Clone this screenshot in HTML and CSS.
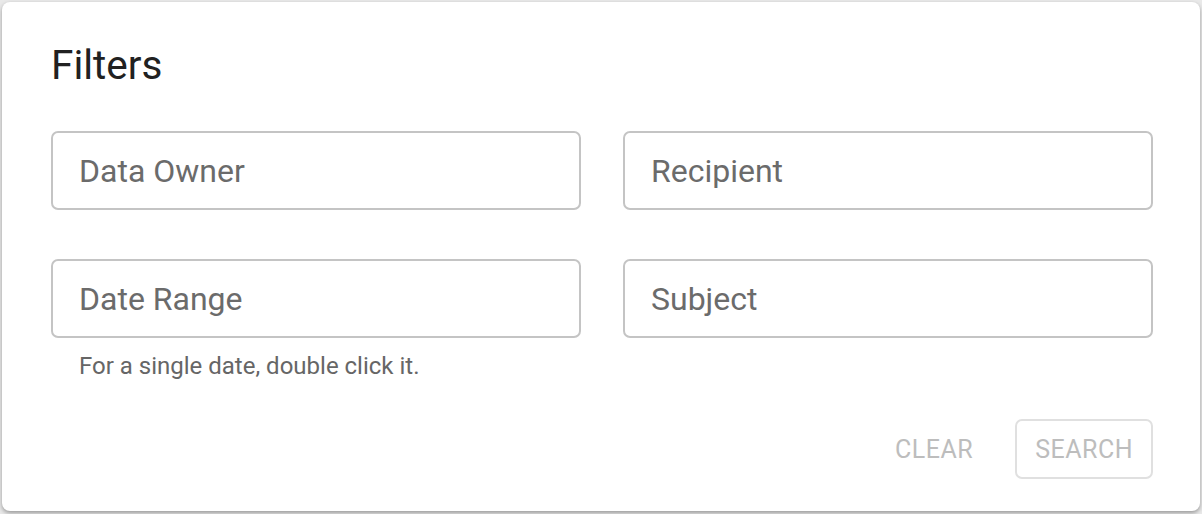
FILE: index.html
```html
<!DOCTYPE html>
<html>
<head>
<meta charset="utf-8">
<link rel="stylesheet" href="styles.css">
</head>
<body>
<div class="dialog">
  <h2 class="title">Filters</h2>
  <div class="grid">
    <div class="field">
      <div class="input"><span class="placeholder">Data Owner</span></div>
    </div>
    <div class="field">
      <div class="input"><span class="placeholder">Recipient</span></div>
    </div>
    <div class="field">
      <div class="input"><span class="placeholder">Date Range</span></div>
      <p class="helper">For a single date, double click it.</p>
    </div>
    <div class="field">
      <div class="input"><span class="placeholder">Subject</span></div>
    </div>
  </div>
  <div class="actions">
    <button class="btn text">CLEAR</button>
    <button class="btn outlined">SEARCH</button>
  </div>
</div>
</body>
</html>
```
FILE: styles.css
```css
html, body {
  margin: 0;
  padding: 0;
}
body {
  width: 1202px;
  height: 514px;
  background: #e9e9e9;
  font-family: Roboto, "Noto Sans", sans-serif;
  overflow: hidden;
  padding: 2px 2px 0 2px;
  box-sizing: border-box;
}
.dialog {
  background: #fff;
  border-radius: 8px;
  height: 509px;
  box-sizing: border-box;
  padding: 39px 47px 0 49px;
  box-shadow: 0 2px 4px rgba(0,0,0,0.35);
}
.title {
  margin: 0;
  font-size: 40.5px;
  font-weight: 400;
  line-height: 48px;
  color: #212121;
}
.grid {
  margin-top: 42px;
  display: grid;
  grid-template-columns: 1fr 1fr;
  column-gap: 42px;
  row-gap: 49px;
}
.input {
  height: 79px;
  border: 2px solid #c4c4c4;
  border-radius: 7px;
  box-sizing: border-box;
  display: flex;
  align-items: center;
  padding-left: 26px;
}
.placeholder {
  font-size: 32px;
  color: #6b6b6b;
}
.helper {
  margin: 13px 0 0 28px;
  font-size: 24px;
  color: #666;
  line-height: 30px;
}
.actions {
  display: flex;
  justify-content: flex-end;
  align-items: center;
  gap: 22px;
  margin-top: 38px;
}
.btn {
  font-family: Roboto, sans-serif;
  font-size: 25px;
  font-weight: 400;
  color: #bdbdbd;
  background: none;
  height: 60px;
  border-radius: 7px;
  padding: 0 20px;
  letter-spacing: 0.5px;
}
.btn.text {
  border: none;
}
.btn.outlined {
  border: 2px solid #e0e0e0;
  padding: 0 18px;
}
```
